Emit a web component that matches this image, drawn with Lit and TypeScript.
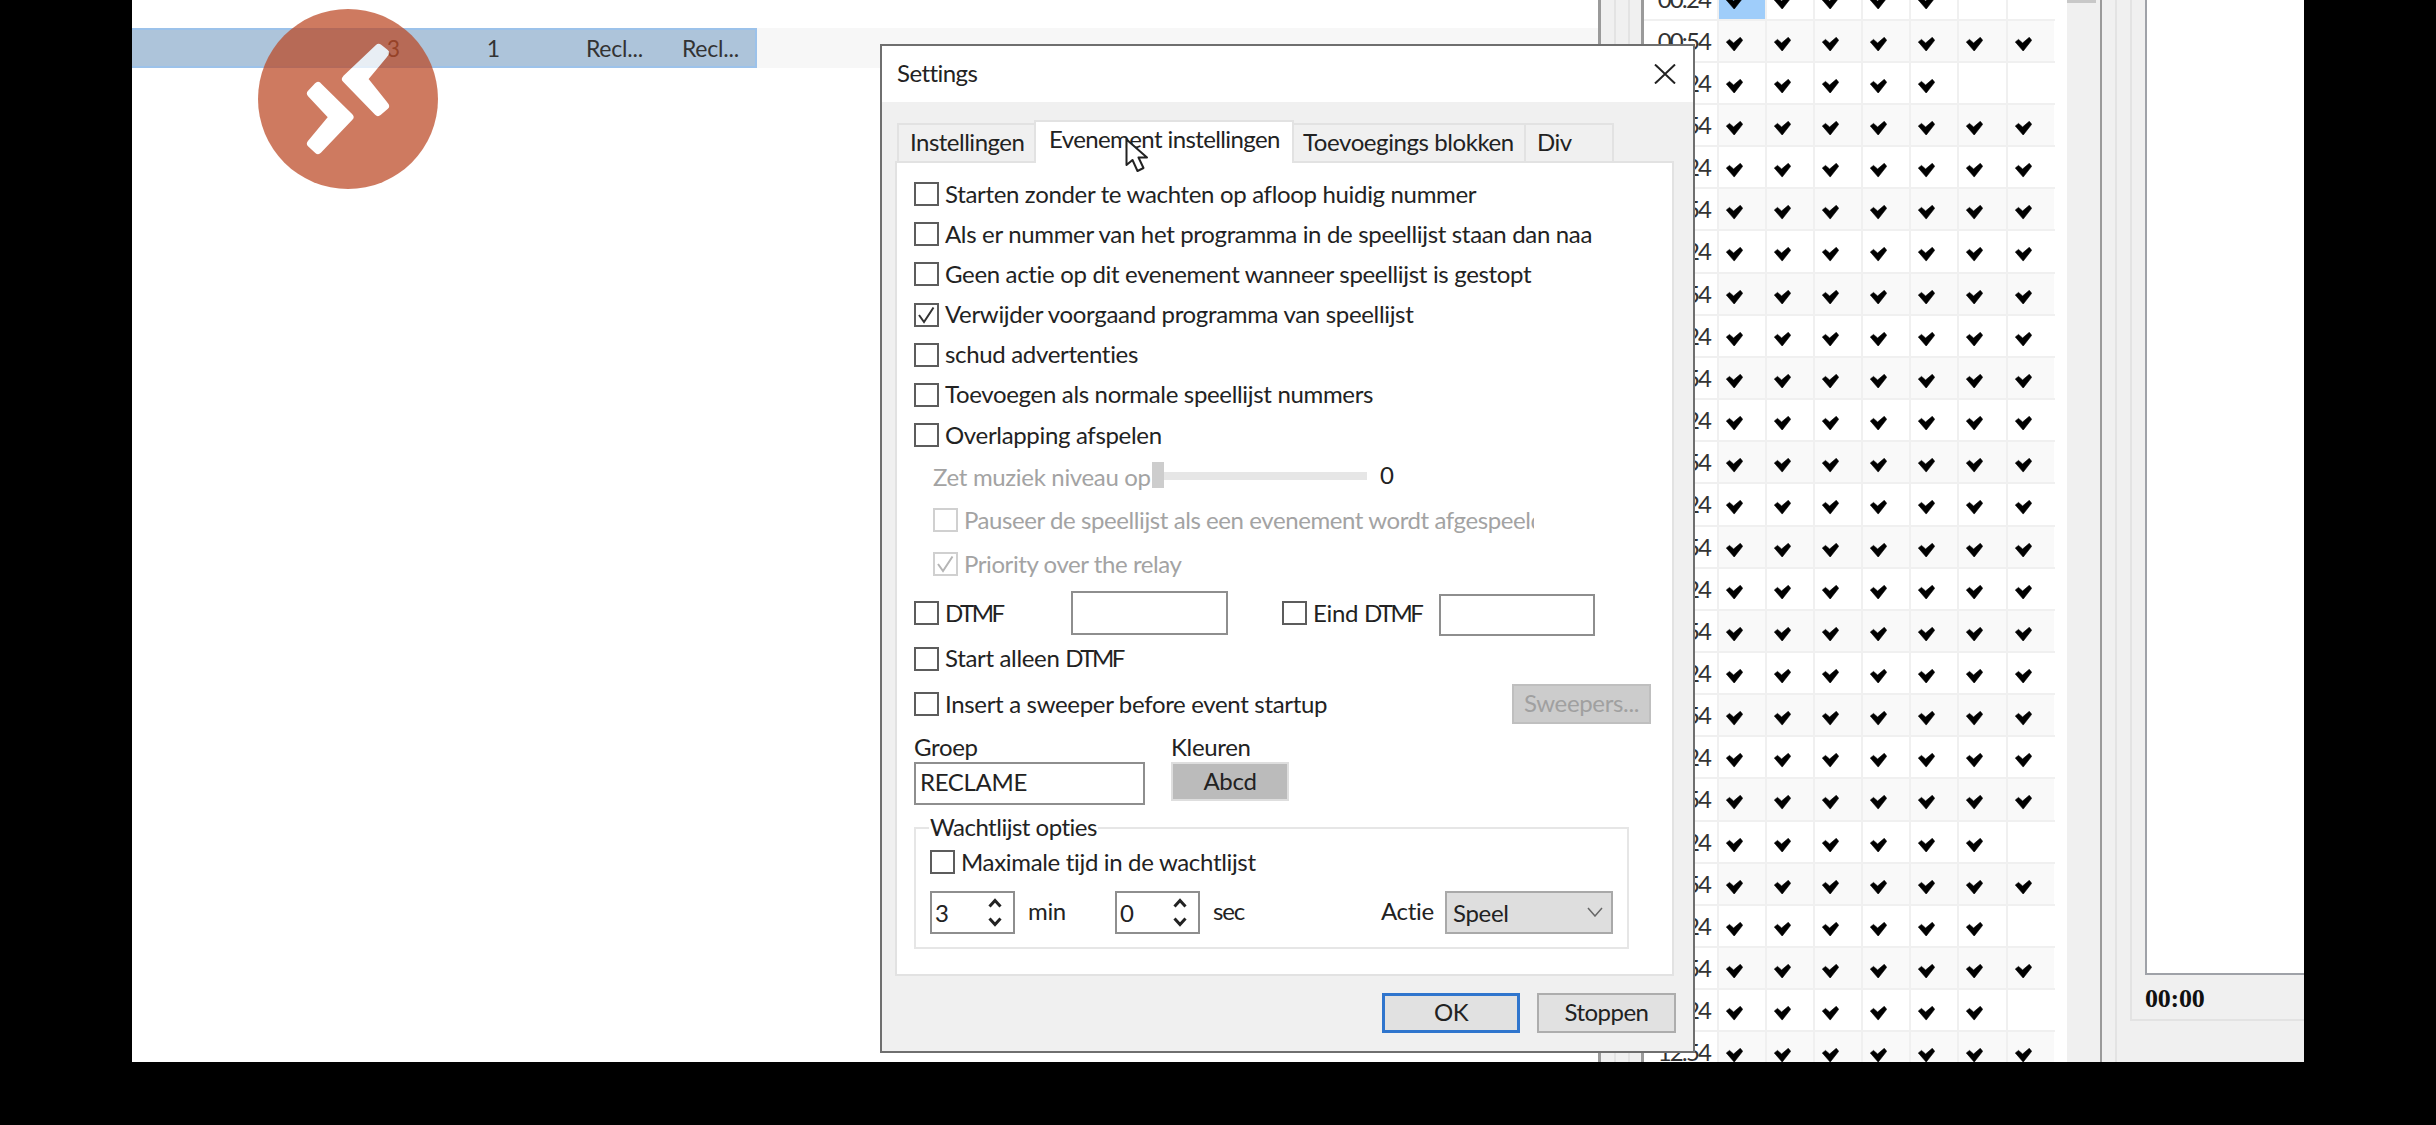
import { LitElement, html, css, svg } from "lit";
import { customElement } from "lit/decorators.js";

const COUNTS: number[] = [];
for (let i = 0; i < 27; i++) {
  if (i === 0 || i === 2) COUNTS.push(5);
  else if (i === 20 || i === 22 || i === 24) COUNTS.push(6);
  else COUNTS.push(7);
}

const timeLabel = (i: number) => {
  const mins = 24 + i * 30;
  const h = Math.floor(mins / 60);
  return `${String(h).padStart(2, "0")}:${String(mins % 60).padStart(2, "0")}`;
};

const checkMark = svg`<svg class="mark" viewBox="0 0 17 14.4" width="17" height="14.4"><path d="M0.300 5 3.500 2.400 7.600 6 14.300 0.300 16.700 3.300 8.200 14.100Z" fill="#000" stroke="#000" stroke-width=".6"/></svg>`;
const tick = svg`<svg viewBox="0 0 24 24" width="24" height="24"><path d="M5 12l5 7L19.500 4.500" fill="none" stroke="currentColor" stroke-width="2"/></svg>`;

@customElement("app-root")
export class AppRoot extends LitElement {
  static styles = css`
    :host { display: block; width: 2436px; height: 1125px; background: #000; overflow: hidden; }
    * { box-sizing: border-box; }
    .desktop {
      position: relative; width: 2172px; height: 1062px; margin-left: 132px; background: #fff;
      display: flex; overflow: hidden; filter: blur(0.5px);
      font-family: "Lato", "Open Sans", sans-serif; color: #222; font-size: 24px;
    }
    .list { width: 1466px; padding-top: 28px; flex: none; }
    .listrow { height: 40px; display: flex; background: #f7f7f7; }
    .selected { width: 625px; background: #adc4da; border: solid #9cc2ea; border-width: 2px 2px 2px 0; position: relative; display: flex; align-items: center; font-size: 23px; letter-spacing: -.2px; color: #333; }
    .c1 { width: 268px; text-align: right; }
    .c2 { width: 100px; text-align: right; }
    .c3 { width: 143px; text-align: right; }
    .c4 { width: 96px; text-align: right; }
    .strip { display: flex; flex: none; height: 100%; background: #f0f0f0; }
    .strip.a { width: 46px; border-left: 3px solid #9a9a9a; border-right: 3px solid #9a9a9a; }
    .strip.b { width: 30px; border-left: 2px solid #9a9a9a; }
    .gap13 { width: 13px; }
    .gap12 { width: 12px; }
    .vline { width: 2px; background: #e3e3e3; }
    .sched { width: 411px; flex: none; margin-top: -21.5px; }
    .grow { display: flex; height: 42.17px; border-bottom: 2px solid #f0f0f0; }
    .time { width: 73px; padding-right: 7px; text-align: right; font-size: 24px; letter-spacing: -1.9px; color: #333; line-height: 40px; }
    .cell { width: 48.1px; border-left: 2px solid #f0f0f0; padding: 16px 0 0 7px; }
    .grow.odd .cell { background: #f9f9f9; }
    .cell.hit { background: #9fcdfa; }
    .mark { display: block; }
    .scroll { width: 33px; flex: none; height: 100%; background: #f0f0f0; margin-left: 12px; }
    .thumb { width: 29px; height: 3px; background: #c8c8c8; }
    .side { flex: none; width: 174px; height: 100%; background: #f0f0f0; }
    .sideinner { height: 1021px; border-left: 2px solid #e3e3e3; border-bottom: 2px solid #e3e3e3; padding-left: 13px; }
    .box { height: 975px; background: #fff; border-left: 2px solid #9fa2a8; border-bottom: 2px solid #9fa2a8; }
    .clock { font-family: "Liberation Serif", serif; font-weight: 700; font-size: 26px; line-height: 34px; margin-top: 7px; letter-spacing: -.2px; color: #111; }

    .rdp { position: absolute; left: 126px; top: 9px; width: 180px; height: 180px; opacity: .72; }
    .rdp svg { display: block; }

    .dialog {
      position: absolute; left: 748px; top: 44px; width: 815px; height: 1009px;
      background: #f0f0f0; border: 2px solid #6f6f6f; display: flex; flex-direction: column;
    }
    .title { height: 56px; background: #fff; flex: none; display: flex; align-items: center; justify-content: space-between; padding: 0 17px 0 15px; font-size: 24px; letter-spacing: -.55px; }
    .title span { padding-bottom: 4px; }
    .title svg { display: block; margin-top: -1px; }
    .tabs { height: 59px; flex: none; padding: 5px 0 0 17px; display: flex; align-items: flex-end; position: relative; z-index: 1; }
    .tab { height: 38px; background: #f0f0f0; border: 2px solid #e2e2e2; border-bottom: 0; margin-left: -2px; padding: 0 0 0 11px; white-space: nowrap; letter-spacing: -.5px; line-height: 33px; }
    .tab.on { height: 43px; background: #fff; line-height: 33px; margin-bottom: -2px; padding-left: 13px; z-index: 1; letter-spacing: -.6px; }
    .t1 { width: 139px; } .t2 { width: 260px; } .t3 { width: 234px; padding-left: 9px; letter-spacing: -.42px; } .t4 { width: 90px; }
    .panel { height: 815px; margin: 0 19px 0 13px; background: #fff; border: 2px solid #e2e2e2; padding: 11px 0 0 17px; flex: none; display: flex; flex-direction: column; letter-spacing: -.33px; }
    .row { display: flex; align-items: center; height: 40.17px; flex: none; white-space: nowrap; }
    .lbl { padding-bottom: 2px; }
    .caps { letter-spacing: -2.5px; }
    .cb { width: 25px; height: 24px; border: 2px solid #5c5c5c; background: #fff; flex: none; margin-right: 6px; color: #333; display: block; }
    .cb svg { display: block; margin: -2px; }
    .off { color: #a3a3a3; }
    .off .cb { border-color: #d0d0d0; color: #b5b5b5; }
    .indent { padding-left: 19px; }
    .slider { height: 42px; padding-left: 19px; margin-top: 1px; }
    .slider .lbl { width: 219px; overflow: hidden; }
    .track { width: 215px; height: 8px; background: #e6e6e6; position: relative; flex: none; margin-top: -2px; }
    .knob { position: absolute; left: 0; top: -10px; width: 12px; height: 26px; background: #cdcdcd; }
    .zero { color: #222; margin-left: 13px; padding-bottom: 6px; }
    .pause { height: 44px; letter-spacing: -.42px; }
    .pause .lbl { width: 570px; overflow: hidden; }
    .dtmf { height: 48px; position: relative; margin-top: 3px; }
    .field { background: #fff; border: 2px solid #8e8e8e; flex: none; }
    .lblw1 { width: 126px; }
    .f1 { width: 157px; height: 44px; }
    .lblw2 { width: 105px; margin-right: 21px; }
    .f2 { width: 156px; height: 42px; margin-top: 4px; }
    .gapL { width: 54px; }
    .start { height: 41px; margin-top: 1px; }
    .insert { height: 46px; margin-top: 2px; justify-content: space-between; padding-right: 21px; }
    .grouplbl { height: 29px; margin-top: 6px; }
    .grouplbl span:first-child { width: 257px; }
    .groupvals { height: 44px; align-items: flex-start; }
    .groupinput { width: 231px; height: 43px; border: 2px solid #8e8e8e; padding-left: 4px; line-height: 35px; margin-right: 26px; flex: none; }
    .abcd { width: 118px; height: 39px; background: #bbb; border: 2px solid #dedede; text-align: center; line-height: 33px; flex: none; }
    .fieldset { position: relative; width: 715px; height: 122px; margin-top: 21px; border: 2px solid #e6e6e6; flex: none; padding: 20px 0 0 14px; }
    .legend { position: absolute; left: 13px; top: -16px; background: #fff; padding: 0 1px 0 1px; line-height: 28px; letter-spacing: -.5px; }
    .maxrow { height: 26px; }
    .ctrls { height: 44px; margin-top: 15px; display: flex; align-items: center; white-space: nowrap; }
    .ctrls .lbl { padding-bottom: 3px; }
    .spin { width: 85px; height: 43px; border: 2px solid #8e8e8e; display: flex; align-items: center; justify-content: space-between; padding: 0 11px 0 3px; flex: none; line-height: 35px; }
    .spin svg { display: block; }
    .unit1 { width: 100px; padding-left: 13px; flex: none; }
    .unit2 { width: 181px; padding-left: 13px; flex: none; letter-spacing: -1.2px; }
    .actie { margin-right: 11px; width: 53px; flex: none; }
    .select { width: 168px; height: 43px; background: #dedede; border: 2px solid #a9a9a9; display: flex; align-items: center; justify-content: space-between; padding: 0 8px 0 6px; flex: none; }
    .footer { flex: 1; display: flex; justify-content: flex-end; align-items: flex-start; gap: 17px; padding: 17px 17px 0 0; letter-spacing: -.55px; }
    .btn { width: 139px; height: 40px; background: #e1e1e1; border: 2px solid #adadad; text-align: center; line-height: 34px; flex: none; }
    .btn.def { width: 138px; border: 3px solid #2f75cd; line-height: 32px; }
    .sweep { width: 139px; height: 40px; background: #ccc; border: 2px solid #bfbfbf; text-align: center; line-height: 34px; color: #a0a0a0; flex: none; }
    .cursor { position: absolute; left: 993px; top: 138px; z-index: 3; }
    .cursor svg { display: block; }
  `;

  private cb(text: unknown, checked = false, cls = "") {
    return html`<div class="row ${cls}"><span class="cb">${checked ? tick : ""}</span><span class="lbl">${text}</span></div>`;
  }

  render() {
    const arrows = html`<svg width="14" height="31" viewBox="0 0 14 31"><path d="M1.500 9.500 7 3.500l5.500 6M1.500 21.500 7 27.500l5.500-6" fill="none" stroke="#222" stroke-width="3"/></svg>`;
    return html`
      <div class="desktop">
        <div class="list">
          <div class="listrow">
            <div class="selected">
              <span class="c1">3</span><span class="c2">1</span><span class="c3">Recl...</span><span class="c4">Recl...</span>
            </div>
          </div>
        </div>
        <div class="strip a"><div class="gap13"></div><div class="vline"></div><div class="gap12"></div><div class="vline"></div></div>
        <div class="sched">
          ${COUNTS.map((n, i) => html`
            <div class="grow ${i % 2 ? "odd" : ""}">
              <div class="time">${timeLabel(i)}</div>
              ${[0, 1, 2, 3, 4, 5, 6].map((c) => html`<div class="cell ${i === 0 && c === 0 ? "hit" : ""}">${c < n ? checkMark : ""}</div>`)}
            </div>`)}
        </div>
        <div class="scroll"><div class="thumb"></div></div>
        <div class="strip b"><div class="gap13"></div><div class="vline"></div></div>
        <div class="side">
          <div class="sideinner">
            <div class="box"></div>
            <div class="clock">00:00</div>
          </div>
        </div>

        <div class="rdp">
          <svg width="180" height="180" viewBox="0 0 180 180">
            <circle cx="90" cy="90" r="90" fill="#bc4824"/>
            <g fill="#fff" stroke="#fff" stroke-width="8" stroke-linejoin="round">
              <path d="M60 77 91.500 108 60 141 53 134.500 75 108 53 84.500Z"/>
              <path d="M120.700 39 127 44 105.500 70 127 97 120 103 88 70Z"/>
            </g>
          </svg>
        </div>

        <div class="dialog">
          <div class="title">
            <span>Settings</span>
            <svg width="22" height="20" viewBox="0 0 22 20"><path d="M1 0.500 21 19.500M21 0.500 1 19.500" stroke="#222" stroke-width="2" fill="none"/></svg>
          </div>
          <div class="tabs">
            <div class="tab t1">Instellingen</div>
            <div class="tab on t2">Evenement instellingen</div>
            <div class="tab t3">Toevoegings blokken</div>
            <div class="tab t4">Div</div>
          </div>
          <div class="panel">
            ${this.cb("Starten zonder te wachten op afloop huidig nummer")}
            ${this.cb("Als er nummer van het programma in de speellijst staan dan naa")}
            ${this.cb("Geen actie op dit evenement wanneer speellijst is gestopt")}
            ${this.cb("Verwijder voorgaand programma van speellijst", true)}
            ${this.cb("schud advertenties")}
            ${this.cb("Toevoegen als normale speellijst nummers")}
            ${this.cb("Overlapping afspelen")}
            <div class="row slider off">
              <span class="lbl">Zet muziek niveau op</span>
              <div class="track"><div class="knob"></div></div>
              <span class="zero">0</span>
            </div>
            ${this.cb("Pauseer de speellijst als een evenement wordt afgespeeld", false, "off indent pause")}
            ${this.cb("Priority over the relay", true, "off indent pause")}
            <div class="row dtmf">
              <span class="cb"></span><span class="lbl lblw1 caps">DTMF</span>
              <div class="field f1"></div>
              <div class="gapL"></div>
              <span class="cb"></span><span class="lbl lblw2">Eind <span class="caps">DTMF</span></span>
              <div class="field f2"></div>
            </div>
            ${this.cb(html`Start alleen <span class="caps">DTMF</span>`, false, "start")}
            <div class="row insert">
              <div class="row"><span class="cb"></span><span class="lbl">Insert a sweeper before event startup</span></div>
              <div class="sweep">Sweepers...</div>
            </div>
            <div class="row grouplbl"><span class="lbl">Groep</span><span class="lbl">Kleuren</span></div>
            <div class="row groupvals">
              <div class="groupinput">RECLAME</div>
              <div class="abcd">Abcd</div>
            </div>
            <div class="fieldset">
              <span class="legend">Wachtlijst opties</span>
              <div class="row maxrow"><span class="cb"></span><span class="lbl">Maximale tijd in de wachtlijst</span></div>
              <div class="ctrls">
                <div class="spin"><span>3</span>${arrows}</div>
                <span class="lbl unit1">min</span>
                <div class="spin"><span>0</span>${arrows}</div>
                <span class="lbl unit2">sec</span>
                <span class="lbl actie">Actie</span>
                <div class="select">
                  <span>Speel</span>
                  <svg width="16" height="10" viewBox="0 0 16 10"><path d="M1 1l7 8 7-8" fill="none" stroke="#666" stroke-width="1.500"/></svg>
                </div>
              </div>
            </div>
          </div>
          <div class="footer">
            <div class="btn def">OK</div>
            <div class="btn">Stoppen</div>
          </div>
        </div>

        <div class="cursor">
          <svg width="24" height="35" viewBox="0 0 24 35"><path d="M1.500 1.500V27l6-5 5 11 6-3-5-10.500h8.500Z" fill="#fff" stroke="#222" stroke-width="2" stroke-linejoin="round"/></svg>
        </div>
      </div>
    `;
  }
}
